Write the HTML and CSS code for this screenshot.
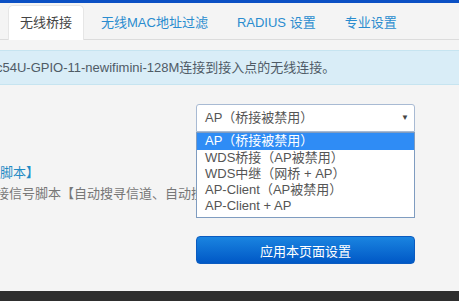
FILE: index.html
```html
<!DOCTYPE html>
<html lang="zh-CN">
<head>
    <meta charset="UTF-8">
    <meta name="viewport" content="width=device-width, initial-scale=1.0">
    <title>无线桥接</title>
    <link rel="stylesheet" href="styles.css">
</head>
<body>
    <div class="topbar"></div>

    <!-- 页面标签 -->
    <ul class="tabs">
        <li class="tab active">无线桥接</li>
        <li class="tab">无线MAC地址过滤</li>
        <li class="tab">RADIUS 设置</li>
        <li class="tab">专业设置</li>
    </ul>

    <div class="alert">c54U-GPIO-11-newifimini-128M连接到接入点的无线连接。</div>

    <div class="form">
        <!-- 工作模式 -->
        <div class="row">
            <div class="label"></div>
            <div class="control">
                <div class="select">
                    <span>AP（桥接被禁用）</span>
                    <span class="arrow">▼</span>
                    <ul class="options">
                        <li class="selected">AP（桥接被禁用）</li>
                        <li>WDS桥接（AP被禁用）</li>
                        <li>WDS中继（网桥 + AP）</li>
                        <li>AP-Client（AP被禁用）</li>
                        <li>AP-Client + AP</li>
                    </ul>
                </div>
            </div>
        </div>

        <div class="desc">
            <p class="link">脚本】</p>
            <p class="note">接信号脚本【自动搜寻信道、自动搜寻中继信号、自动切换】</p>
        </div>

        <div class="row">
            <div class="label"></div>
            <div class="control">
                <button class="btn">应用本页面设置</button>
            </div>
        </div>
    </div>

    <div class="footer"></div>
</body>
</html>
```

FILE: styles.css
```css
body {
    margin: 0;
    background-color: #f4f4f4;
    font-family: "Liberation Sans", "Noto Sans CJK SC", sans-serif;
    font-size: 13px;
    color: #555;
    overflow: hidden;
}

.topbar {
    height: 3px;
    background-color: #0b50c4;
}

.tabs {
    display: flex;
    margin: 0;
    padding: 0 0 0 8px;
    list-style: none;
    height: 36px;
    border-bottom: 1px solid #dcdcdc;
}

.tab {
    margin: 2px 5px 0 0;
    padding: 0 11px;
    height: 34px;
    line-height: 34px;
    color: #2a8ccf;
    border: 1px solid transparent;
    border-bottom: none;
    border-radius: 5px 5px 0 0;
    box-sizing: border-box;
}

.tab.active {
    background-color: #fff;
    color: #444;
    border-color: #e6e6e6;
    height: 35px;
}

.alert {
    margin-top: 10px;
    height: 35px;
    line-height: 33px;
    box-sizing: border-box;
    background-color: #d9edf7;
    border-top: 1px solid #c6e4f0;
    border-bottom: 1px solid #c6e4f0;
    color: #4f5b66;
    text-indent: -4px;
    white-space: nowrap;
}

.form {
    padding-top: 19px;
}

.row {
    display: flex;
}

.label {
    width: 196px;
    flex-shrink: 0;
}

.control {
    width: 219px;
}

.select {
    position: relative;
    height: 28px;
    line-height: 26px;
    box-sizing: border-box;
    padding-left: 8px;
    background-color: #fff;
    border: 1px solid #a8bad3;
    border-radius: 3px 3px 0 0;
    color: #555;
    z-index: 2;
}

.arrow {
    position: absolute;
    right: 5px;
    top: 0;
    font-size: 8px;
    color: #444;
}

.options {
    position: absolute;
    top: 27px;
    left: -1px;
    right: -1px;
    margin: 0;
    padding: 0 0 3px;
    list-style: none;
    background-color: #fff;
    border: 1px solid #7f9cc0;
}

.options li {
    height: 16px;
    line-height: 16px;
    padding-left: 8px;
    color: #555;
}

.options li.selected {
    height: 17px;
    background-color: #2f8cf5;
    color: #fff;
}

.desc {
    margin-top: 30px;
}

.desc p {
    margin: 0;
    line-height: 21px;
    white-space: nowrap;
}

.desc .link {
    color: #1f8bc4;
}

.desc .note {
    color: #777;
    text-indent: -4px;
}

.btn {
    margin-top: 32px;
    width: 219px;
    height: 28px;
    padding: 0;
    font-family: inherit;
    font-size: 13px;
    color: #fff;
    background: linear-gradient(#1a84e0, #0058c6);
    border: 1px solid #0a5bc0;
    border-radius: 4px;
    cursor: pointer;
}

.footer {
    margin-top: 27px;
    height: 20px;
    background-color: #2e2e2e;
}
```
